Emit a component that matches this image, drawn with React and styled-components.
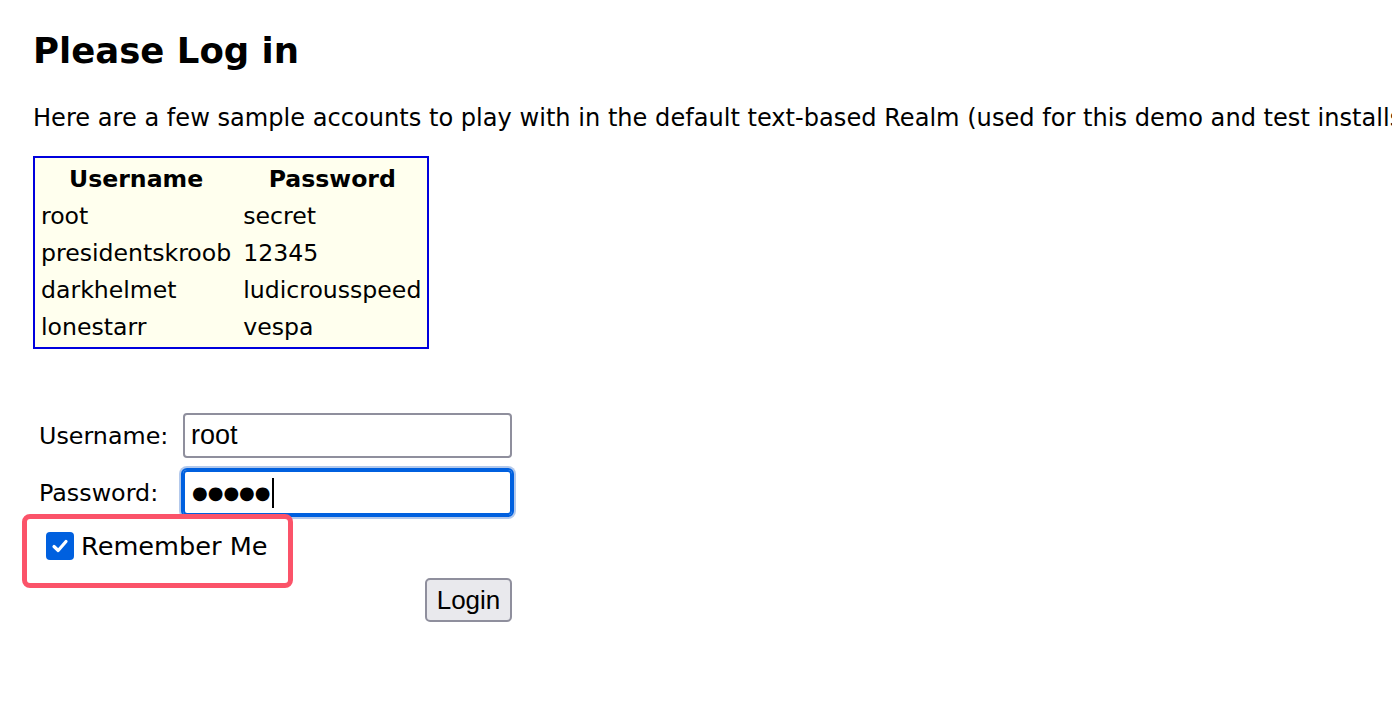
import React from 'react';
import styled, { createGlobalStyle } from 'styled-components';

const GlobalStyle = createGlobalStyle`
  html, body {
    margin: 0;
    padding: 0;
    background: #ffffff;
    overflow: hidden;
  }
  body {
    font-family: 'DejaVu Sans', Verdana, sans-serif;
    color: #000;
  }
`;

const Page = styled.div`
  padding: 0 0 0 33px;
  width: 1392px;
  box-sizing: border-box;
`;

const Title = styled.h1`
  font-size: 35.5px;
  font-weight: bold;
  margin: 0;
  padding-top: 31px;
  line-height: 40px;
`;

const Intro = styled.p`
  font-size: 24.1px;
  margin: 33px 0 0;
  line-height: 28px;
  white-space: nowrap;
`;

const Accounts = styled.table`
  margin-top: 24px;
  border: 2px solid #0000dd;
  background: #ffffee;
  border-collapse: separate;
  border-spacing: 0;
  font-size: 23.6px;
  padding: 2px 0;
`;

const HeadCell = styled.th`
  font-weight: bold;
  text-align: center;
  height: 37px;
  padding: 0 6px 0 6px;
`;

const Cell = styled.td`
  height: 37px;
  padding: 0 6px 0 6px;
  white-space: nowrap;
`;

const Form = styled.form`
  margin-top: 64px;
  margin-left: 6px;
  width: 473px;
  display: flex;
  flex-direction: column;
`;

const Row = styled.div`
  display: flex;
  align-items: center;
  height: ${(p) => p.$h}px;
  margin-top: ${(p) => p.$top || 0}px;
  justify-content: ${(p) => (p.$end ? 'flex-end' : 'flex-start')};
  position: relative;
`;

const Label = styled.label`
  width: 144px;
  font-size: 23.8px;
`;

const TextInput = styled.input`
  box-sizing: border-box;
  width: 329px;
  height: 45px;
  border: 2px solid #8f8f9d;
  border-radius: 4px;
  padding: 0 6px;
  font-family: 'Liberation Sans', Arial, sans-serif;
  font-size: 27px;
  color: #000;
  background: #fff;
  outline: none;
`;

const FocusedField = styled.div`
  box-sizing: border-box;
  width: 329px;
  height: 45px;
  border: 2px solid #0060df;
  border-radius: 4px;
  padding: 0 7px;
  display: flex;
  align-items: center;
  font-family: 'DejaVu Sans', sans-serif;
  font-size: 18px;
  letter-spacing: 0;
  outline: 2px solid #0060df;
  box-shadow: 0 0 0 4px #b3c9ec;
`;

const Caret = styled.span`
  display: inline-block;
  width: 2px;
  height: 30px;
  margin-left: 1px;
  background: #000;
`;

const CheckLabel = styled.label`
  display: flex;
  align-items: center;
  gap: 7px;
  font-size: 25.6px;
  margin-left: 7px;
`;

const CheckBox = styled.span`
  width: 28px;
  height: 28px;
  border-radius: 4px;
  background: #0060df;
  display: flex;
  align-items: center;
  justify-content: center;
`;

const Highlight = styled.div`
  position: absolute;
  left: -17px;
  top: -11px;
  width: 271px;
  height: 74px;
  box-sizing: border-box;
  border: 5px solid #fb5369;
  border-radius: 8px;
  pointer-events: none;
`;

const LoginButton = styled.button`
  box-sizing: border-box;
  width: 87px;
  height: 44px;
  border: 2px solid #8f8f9d;
  border-radius: 5px;
  background: #e9e9ed;
  font-family: 'Liberation Sans', Arial, sans-serif;
  font-size: 26px;
  color: #000;
  padding: 0;
`;

const accounts = [
  ['root', 'secret'],
  ['presidentskroob', '12345'],
  ['darkhelmet', 'ludicrousspeed'],
  ['lonestarr', 'vespa'],
];

const App = () => {
  return (
    <>
      <GlobalStyle />
      <Page>
        <Title>Please Log in</Title>
        <Intro>
          Here are a few sample accounts to play with in the default text-based Realm (used for this demo and test installs only).
        </Intro>
        <Accounts>
          <thead>
            <tr>
              <HeadCell>Username</HeadCell>
              <HeadCell>Password</HeadCell>
            </tr>
          </thead>
          <tbody>
            {accounts.map(([user, pass]) => (
              <tr key={user}>
                <Cell>{user}</Cell>
                <Cell>{pass}</Cell>
              </tr>
            ))}
          </tbody>
        </Accounts>
        <Form onSubmit={(e) => e.preventDefault()}>
          <Row $h={45}>
            <Label>Username:</Label>
            <TextInput type="text" defaultValue="root" />
          </Row>
          <Row $h={45} $top={12}>
            <Label>Password:</Label>
            <FocusedField>
              ●●●●●<Caret />
            </FocusedField>
          </Row>
          <Row $h={42} $top={10}>
            <CheckLabel>
              <CheckBox>
                <svg width="20" height="20" viewBox="0 0 20 20">
                  <path d="M4 10.5 L8.2 14.5 L16 5.5" fill="none" stroke="#fff" strokeWidth="3.2" strokeLinecap="round" strokeLinejoin="round" />
                </svg>
              </CheckBox>
              Remember Me
            </CheckLabel>
            <Highlight />
          </Row>
          <Row $h={44} $top={11} $end>
            <LoginButton type="submit">Login</LoginButton>
          </Row>
        </Form>
      </Page>
    </>
  );
};

export default App;
